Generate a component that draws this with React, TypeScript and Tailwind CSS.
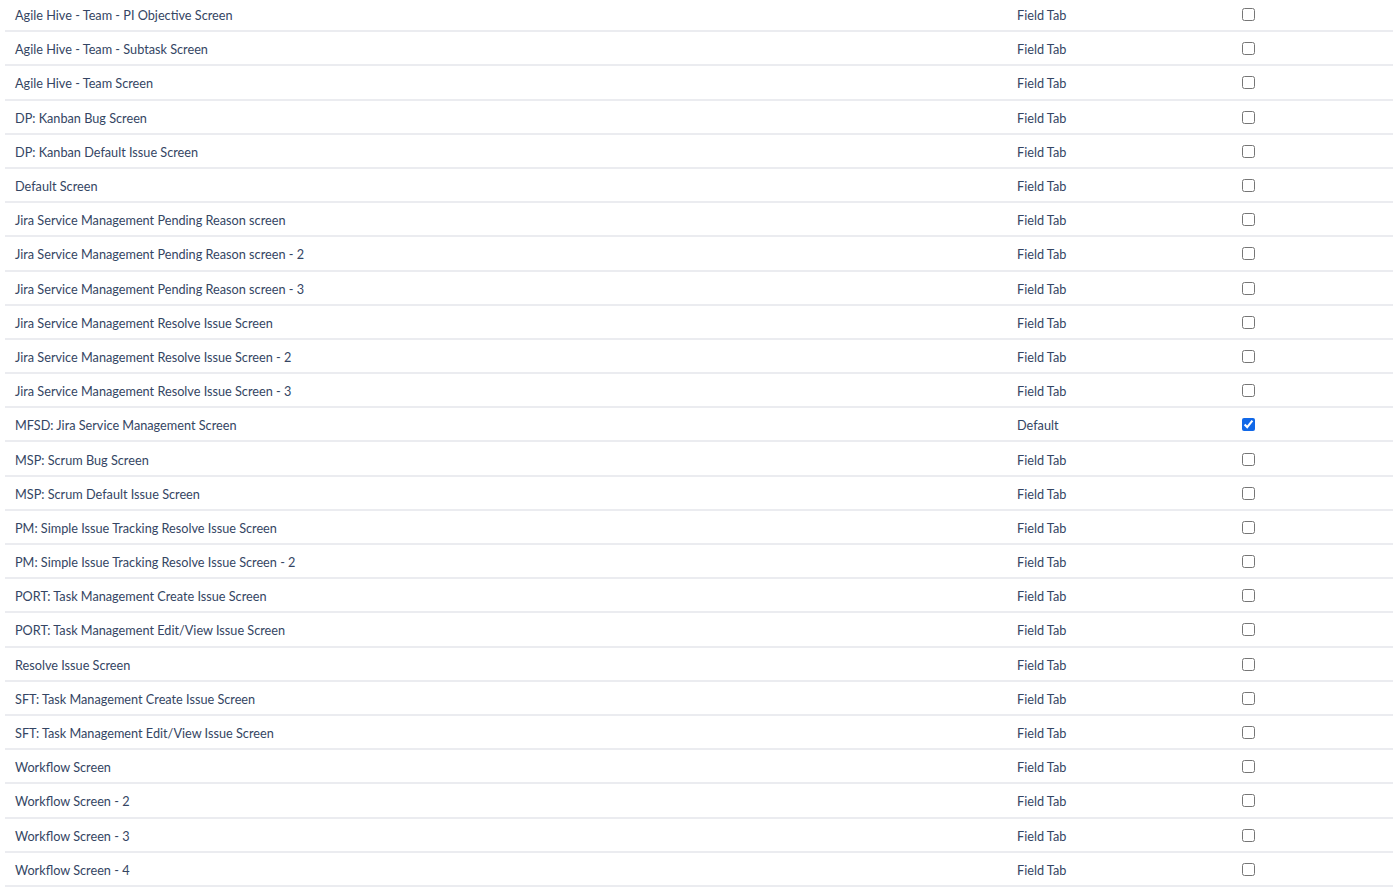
import React from "react";

const rows: { name: string; type: string; checked?: boolean }[] = [
  { name: "Agile Hive - Team - PI Objective Screen", type: "Field Tab" },
  { name: "Agile Hive - Team - Subtask Screen", type: "Field Tab" },
  { name: "Agile Hive - Team Screen", type: "Field Tab" },
  { name: "DP: Kanban Bug Screen", type: "Field Tab" },
  { name: "DP: Kanban Default Issue Screen", type: "Field Tab" },
  { name: "Default Screen", type: "Field Tab" },
  { name: "Jira Service Management Pending Reason screen", type: "Field Tab" },
  { name: "Jira Service Management Pending Reason screen - 2", type: "Field Tab" },
  { name: "Jira Service Management Pending Reason screen - 3", type: "Field Tab" },
  { name: "Jira Service Management Resolve Issue Screen", type: "Field Tab" },
  { name: "Jira Service Management Resolve Issue Screen - 2", type: "Field Tab" },
  { name: "Jira Service Management Resolve Issue Screen - 3", type: "Field Tab" },
  { name: "MFSD: Jira Service Management Screen", type: "Default", checked: true },
  { name: "MSP: Scrum Bug Screen", type: "Field Tab" },
  { name: "MSP: Scrum Default Issue Screen", type: "Field Tab" },
  { name: "PM: Simple Issue Tracking Resolve Issue Screen", type: "Field Tab" },
  { name: "PM: Simple Issue Tracking Resolve Issue Screen - 2", type: "Field Tab" },
  { name: "PORT: Task Management Create Issue Screen", type: "Field Tab" },
  { name: "PORT: Task Management Edit/View Issue Screen", type: "Field Tab" },
  { name: "Resolve Issue Screen", type: "Field Tab" },
  { name: "SFT: Task Management Create Issue Screen", type: "Field Tab" },
  { name: "SFT: Task Management Edit/View Issue Screen", type: "Field Tab" },
  { name: "Workflow Screen", type: "Field Tab" },
  { name: "Workflow Screen - 2", type: "Field Tab" },
  { name: "Workflow Screen - 3", type: "Field Tab" },
  { name: "Workflow Screen - 4", type: "Field Tab" },
];

export default function App() {
  return (
    <div
      className="w-[1400px] h-[896px] overflow-hidden bg-white px-[5px] text-[12.7px] text-[#344563]"
      style={{ fontFamily: 'Lato, "Noto Sans", sans-serif' }}
    >
      <div className="-mt-[2px] w-[1388px]">
        {rows.map((r) => (
          <div
            key={r.name}
            className="grid h-[34.2px] grid-cols-[1002px_225px_1fr] items-center border-b-2 border-[#ebecf0]"
          >
            <div className="pl-[10px] pt-[3px]">{r.name}</div>
            <div className="pl-[10px] pt-[3px]">{r.type}</div>
            <div className="flex pl-[10px] pt-[1px]">
              <input
                type="checkbox"
                defaultChecked={!!r.checked}
                className="m-0 h-[13px] w-[13px] accent-[#1168e8]"
              />
            </div>
          </div>
        ))}
      </div>
    </div>
  );
}
